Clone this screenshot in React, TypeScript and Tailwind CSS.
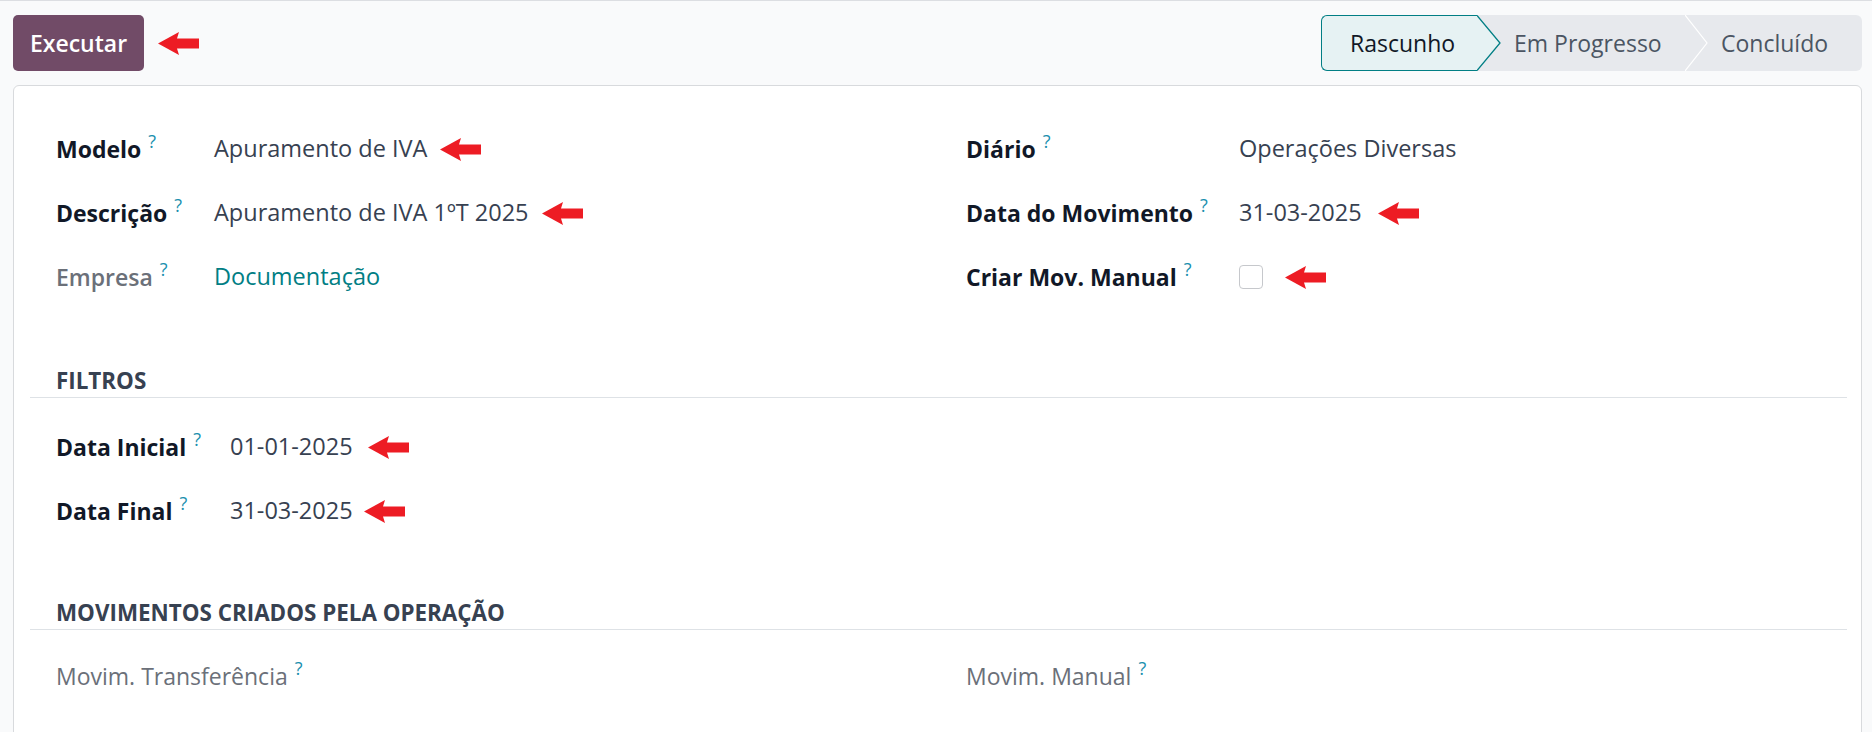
import React from "react";

function Arrow({ className = "" }: { className?: string }) {
  return (
    <svg width="41" height="23" viewBox="0 0 41 23" className={className}>
      <polygon points="0,11.5 21,0 19,6.5 41,6.5 41,16.5 19,16.5 21,23" fill="#ed1c24" />
    </svg>
  );
}

function Label({ text, weight = "font-bold", gray = false }: { text: string; weight?: string; gray?: boolean }) {
  return (
    <span className={`relative whitespace-nowrap ${weight} ${gray ? "text-[#6b7079]" : "text-[#111827]"}`}>
      {text}
      <span className="relative top-[-10px] ml-[7px] text-[18px] font-normal text-[#1a8fae]">?</span>
    </span>
  );
}

function Row({
  label,
  labelW,
  children,
  weight = "font-bold",
  gray = false,
}: {
  label: string;
  labelW: string;
  children?: React.ReactNode;
  weight?: string;
  gray?: boolean;
}) {
  return (
    <div className="flex h-[64px] items-center">
      <div className={`${labelW} shrink-0`}>
        <Label text={label} weight={weight} gray={gray} />
      </div>
      <div className="flex items-center text-[23.5px] text-[#374151]">{children}</div>
    </div>
  );
}

function SectionHeader({ text }: { text: string }) {
  return (
    <div className="ml-[16px] mr-[14px] border-b border-[#dee2e6] pb-[3px] pl-[26px]">
      <div className="h-[26px] text-[22.4px] font-bold uppercase leading-[26px] text-[#374151]">{text}</div>
    </div>
  );
}

function StatusBar() {
  return (
    <div className="flex h-[56px] rounded-[6px] bg-[#e7e9ed] text-[23px]">
      <div className="relative flex w-[156px] items-center rounded-l-[6px] border border-r-0 border-[#017e84] bg-[#e6f2f3] pl-[28px] text-[#111827]">
        Rascunho
        <svg width="25" height="56" viewBox="0 0 25 56" className="absolute left-full top-[-1px] z-10">
          <polygon points="0,0.5 23,28 0,55.5" fill="#e6f2f3" />
          <polyline points="0,0.5 23,28 0,55.5" fill="none" stroke="#017e84" strokeWidth="1.3" />
        </svg>
      </div>
      <div className="relative flex w-[208px] items-center pl-[37px] text-[#4b5563]">
        Em Progresso
        <svg width="25" height="56" viewBox="0 0 25 56" className="absolute left-full top-0 z-10">
          <polyline points="0,0 22,28 0,56" fill="none" stroke="#ffffff" strokeWidth="1.2" />
        </svg>
      </div>
      <div className="flex w-[177px] items-center pl-[36px] text-[#4b5563]">Concluído</div>
    </div>
  );
}

export default function App() {
  return (
    <div className="h-[732px] w-[1872px] overflow-hidden border-t border-[#dcdee2] bg-[#f9fafb] font-['Open_Sans',sans-serif] text-[23px]">
      <div className="flex items-center justify-between pl-[13px] pr-[10px] pt-[14px]">
        <div className="flex items-center gap-[14px]">
          <button className="h-[56px] w-[131px] rounded-[5px] bg-[#714b67] text-[23px] font-semibold text-white">
            Executar
          </button>
          <Arrow />
        </div>
        <StatusBar />
      </div>

      <div className="ml-[13px] mr-[10px] mt-[14px] h-[700px] rounded-t-[6px] border border-[#d8dadd] bg-white pt-[31px]">
        <div className="flex pl-[42px]">
          <div className="w-[910px] shrink-0">
            <Row label="Modelo" labelW="w-[158px]">
              Apuramento de IVA
              <Arrow className="ml-[13px]" />
            </Row>
            <Row label="Descrição" labelW="w-[158px]">
              Apuramento de IVA 1ºT 2025
              <Arrow className="ml-[13px]" />
            </Row>
            <Row label="Empresa" labelW="w-[158px]" weight="font-semibold" gray>
              <span className="text-[#017e84]">Documentação</span>
            </Row>
          </div>
          <div className="flex-1">
            <Row label="Diário" labelW="w-[273px]">
              Operações Diversas
            </Row>
            <Row label="Data do Movimento" labelW="w-[273px]">
              31-03-2025
              <Arrow className="ml-[16px]" />
            </Row>
            <Row label="Criar Mov. Manual" labelW="w-[273px]">
              <span className="block h-[24px] w-[24px] rounded-[4px] border border-[#c6c8cc] bg-white" />
              <Arrow className="ml-[22px]" />
            </Row>
          </div>
        </div>

        <div className="mt-[59px]">
          <SectionHeader text="Filtros" />
        </div>
        <div className="mt-[17px] pl-[42px]">
          <Row label="Data Inicial" labelW="w-[174px]">
            01-01-2025
            <Arrow className="ml-[15px]" />
          </Row>
          <Row label="Data Final" labelW="w-[174px]">
            31-03-2025
            <Arrow className="ml-[11px]" />
          </Row>
        </div>

        <div className="mt-[57px]">
          <SectionHeader text="Movimentos criados pela operação" />
        </div>
        <div className="mt-[14px] flex pl-[42px]">
          <div className="w-[910px] shrink-0">
            <Row label="Movim. Transferência" labelW="w-[300px]" weight="font-normal" gray />
          </div>
          <div className="flex-1">
            <Row label="Movim. Manual" labelW="w-[273px]" weight="font-normal" gray />
          </div>
        </div>
      </div>
    </div>
  );
}
